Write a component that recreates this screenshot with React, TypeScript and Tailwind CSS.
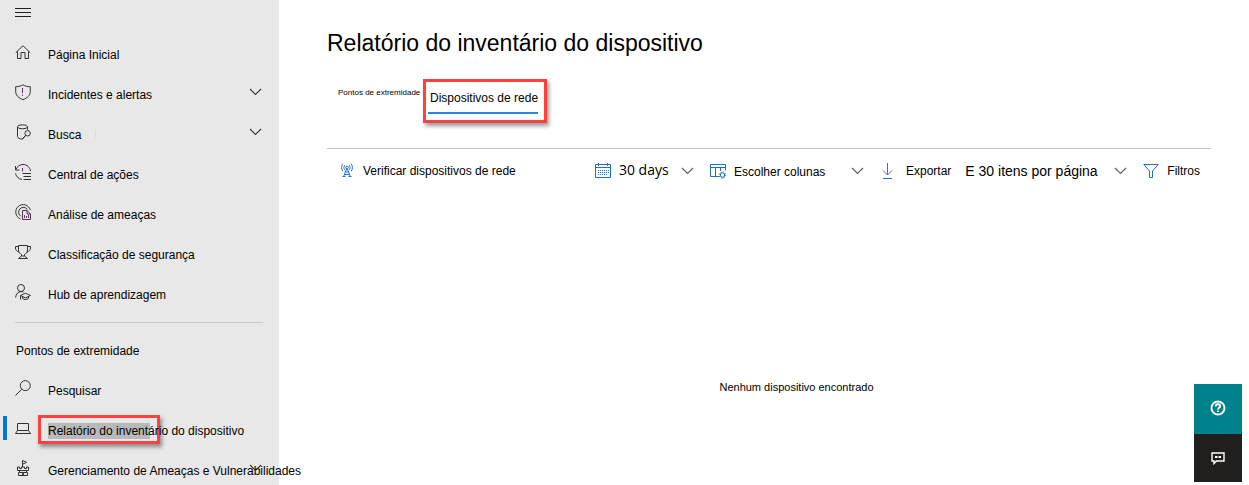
import type { ReactNode } from 'react';

type IconProps = { children: ReactNode; className?: string; size?: number };

function Icon({ children, className = '', size = 16 }: IconProps) {
  return (
    <svg
      width={size}
      height={size}
      viewBox={`0 0 ${size} ${size}`}
      fill="none"
      stroke="currentColor"
      strokeWidth="1"
      className={`shrink-0 ${className}`}
      aria-hidden="true"
    >
      {children}
    </svg>
  );
}

function Chevron({ className = '' }: { className?: string }) {
  return (
    <svg width="13" height="8" viewBox="0 0 13 8" fill="none" stroke="currentColor" strokeWidth="1.1" className={`shrink-0 ${className}`} aria-hidden="true">
      <path d="M1 1l5.500 5.500L12 1" />
    </svg>
  );
}

const homeIcon = (
  <Icon>
    <path d="M.8 8.700L8 1.700l7.200 7M2.500 7.300v7.200h3.500V8.500h4v6h3.500V7.300" />
  </Icon>
);

const shieldIcon = (
  <Icon>
    <path d="M8 .8c2 1.300 4.500 1.900 7.300 1.900v4.800c0 3.900-3 6.500-7.300 8.200C3.700 14 .7 11.400.7 7.500V2.700C3.500 2.700 6 2.100 8 .8z" />
    <path d="M7.500 4v5M7.500 10.500v1.300" stroke="#5b3560" />
  </Icon>
);

const huntingIcon = (
  <Icon>
    <ellipse cx="7.500" cy="2.800" rx="5" ry="2" />
    <path d="M2.500 2.800v9.700c0 1.500 2.200 2.500 5 2.700l2.500-3M12.500 2.800v3" />
    <circle cx="12.600" cy="9.300" r="2.700" />
    <path d="M10.700 11.200l-3.200 3.600" />
  </Icon>
);

const actionIcon = (
  <Icon>
    <path d="M.5 2v4h4M.8 5.700C2 2.500 4.800.5 8 .5c4 0 6.800 2.700 7.500 6.500M.5 9.500c.8 3.300 3.200 5.500 6.500 6" />
    <path d="M7.500 9.500H16M8.500 12.500H16M8.500 15.500H16" />
    <path d="M7.500 4v3.500" stroke="#5b3560" />
  </Icon>
);

const analyticsIcon = (
  <Icon>
    <path d="M5.500 14.900A7.400 7.400 0 1 1 15.300 6M5.800 12.200A4.800 4.800 0 1 1 12.400 5.500" />
    <path d="M7.500 6.500H12l3.500 3.500v5.500h-8zM12 6.500V10h3.500" stroke="#4d3350" />
    <path d="M9.500 14v-3M11.500 14v-2M13.500 14v-3" stroke="#742774" />
  </Icon>
);

const trophyIcon = (
  <Icon>
    <path d="M3.500 1.500h9V6c0 2.300-1.700 4-3 4.500V12h-3v-1.500C5.200 10 3.500 8.300 3.500 6zM3.500 2.500h-3V4c0 2 1.300 3.500 3.500 4M12.500 2.500h3V4c0 2-1.300 3.500-3.500 4M6.500 12l-3 2.500h9l-3-2.500" />
  </Icon>
);

const learningIcon = (
  <Icon>
    <circle cx="6" cy="4" r="3.500" />
    <path d="M.6 13.500C1 10 3 7.600 6 7.600c1 0 1.700.2 2.400.6M5.500 15.500v-4l5-2.300 5 2.300-5 2.400-5-2.400M7.500 12.500v2c2 1.300 4.200 1.300 6 0v-2" />
  </Icon>
);

const searchIcon = (
  <Icon>
    <circle cx="10.300" cy="5.600" r="5" />
    <path d="M6.700 9.200L.5 15.500" />
  </Icon>
);

const laptopIcon = (
  <Icon>
    <path d="M2.500 3.500h11v7h-11zM2.500 10.500l-2 3h15l-2-3" />
  </Icon>
);

const castleIcon = (
  <Icon>
    <path d="M7.500 7V.5l4 1.800-4 2" />
    <path d="M2.500 7v3.500h11V7h-2v1.500h-2V7h-3v1.500h-2V7zM4.500 10.500v2h-1v3h9v-3h-1v-2M4.500 12.500h7M7.500 15.500v-2h1v2" />
  </Icon>
);

type NavItem = { label: string; icon: ReactNode; expandable?: boolean; active?: boolean; marked?: boolean };

const mainItems: NavItem[] = [
  { label: 'Página Inicial', icon: homeIcon },
  { label: 'Incidentes e alertas', icon: shieldIcon, expandable: true },
  { label: 'Busca', icon: huntingIcon, expandable: true, marked: true },
  { label: 'Central de ações', icon: actionIcon },
  { label: 'Análise de ameaças', icon: analyticsIcon },
  { label: 'Classificação de segurança', icon: trophyIcon },
  { label: 'Hub de aprendizagem', icon: learningIcon },
];

const endpointItems: NavItem[] = [
  { label: 'Pesquisar', icon: searchIcon },
  { label: 'Relatório do inventário do dispositivo', icon: laptopIcon, active: true },
  { label: 'Gerenciamento de Ameaças e Vulnerabilidades', icon: castleIcon, expandable: true },
];

function NavLink({ item }: { item: NavItem }) {
  return (
    <li>
      <a href="#" aria-current={item.active ? 'page' : undefined} className="relative flex h-10 items-center pr-4 pl-[15px] whitespace-nowrap">
        {item.active && <span className="absolute top-1.5 left-[3px] h-6 w-1 bg-[#0078d4]" />}
        <span className="mr-[17px] pb-1 text-[#323130]">{item.icon}</span>
        {item.active ? (
          <span className="relative pt-0.5">
            <span className="absolute -top-1.5 -left-2.5 h-[29px] w-[122px] border-[3px] border-[#fb4141] shadow-[2px_3px_4px_rgba(0,0,0,0.4)]" />
            <span className="absolute top-0.5 left-0 h-4 w-[102px] bg-[#b9b9b9]" />
            <span className="relative">{item.label}</span>
          </span>
        ) : (
          <span className="pt-0.5">{item.label}</span>
        )}
        {item.marked && <span className="ml-3.5 h-2 w-px bg-[#b5ecec]" />}
        {item.expandable && <Chevron className="absolute top-3.5 right-[17px] text-[#3b3a39]" />}
      </a>
    </li>
  );
}

function Sidebar() {
  return (
    <aside className="relative z-10 w-[279px] shrink-0 bg-[#e8e8e8]">
      <button type="button" aria-label="Menu" className="flex h-[34px] w-full items-start pt-1 pl-[15px] text-[#201f1e]">
        <Icon>
          <path d="M0 4.500h16M0 8.500h16M0 12.500h16" />
        </Icon>
      </button>
      <nav>
        <ul>
          {mainItems.map((item) => (
            <NavLink key={item.label} item={item} />
          ))}
        </ul>
        <hr className="mt-2 mr-4 mb-[7px] ml-[15px] border-[#c8c8c8]" />
        <h2 className="flex h-10 items-center pt-0.5 pl-4">Pontos de extremidade</h2>
        <ul>
          {endpointItems.map((item) => (
            <NavLink key={item.label} item={item} />
          ))}
        </ul>
      </nav>
    </aside>
  );
}

const antennaIcon = (
  <svg width="12" height="16" viewBox="0 0 12 16" fill="none" stroke="currentColor" strokeWidth="1" className="shrink-0 text-[#1f6fc4]" aria-hidden="true">
    <path d="M5.500 6L2.500 14M6.500 6l3 8M4.500 9h3M3.500 11.500h5M1.500 13.500h3M7.500 13.500h3" />
    <circle cx="6" cy="4.500" r="1.300" />
    <path d="M3.700 2.200c-1 1.300-1 3.300 0 4.600M8.300 2.200c1 1.300 1 3.300 0 4.600M1.800.8C.2 3 .2 6 1.800 8.200M10.200.8c1.600 2.200 1.600 5.200 0 7.400" />
  </svg>
);

const calendarIcon = (
  <Icon className="text-[#1f6fc4]">
    <path d="M.5 1.500h15v13H.5zM.5 4.500h15M3.500 0v3M12.500 0v3" />
    <path d="M3 7.500h11M3 9.500h11M3 11.500h9" strokeDasharray="1 1" />
  </Icon>
);

const columnsIcon = (
  <Icon className="text-[#1f6fc4]">
    <path d="M15.500 7.500V1.500H.5v12h9M.5 4.500h15M5.500 4.500v9M10.500 4.500V8" />
    <circle cx="12.500" cy="12" r="2.200" />
    <circle cx="12.500" cy="12" r="3.100" strokeDasharray="1.200 1.235" />
  </Icon>
);

const downloadIcon = (
  <svg width="12" height="16" viewBox="0 0 12 16" fill="none" stroke="currentColor" strokeWidth="1" className="shrink-0 text-[#1f6fc4]" aria-hidden="true">
    <path d="M5.500 0v12M1 7.500L5.500 12 10 7.500" stroke="#4a6f9c" />
    <path d="M1 15.500h9" />
  </svg>
);

const filterIcon = (
  <Icon className="text-[#1f6fc4]">
    <path d="M.8 1.500h14.400L9.500 8v6.500h-3V8z" />
  </Icon>
);

function Toolbar() {
  return (
    <div className="flex h-11 items-center justify-between border-t border-[#c4c4c4] pr-[11px] pl-3.5 whitespace-nowrap">
      <button type="button" className="flex items-center gap-2.5">
        {antennaIcon}
        Verificar dispositivos de rede
      </button>
      <div className="flex items-center">
        <div className="relative mr-4 flex items-center gap-2">
          {calendarIcon}
          <select aria-label="Período" className="w-[75px] appearance-none pb-0.5 font-['Open_Sans',sans-serif] text-sm">
            <option>30 days</option>
          </select>
          <Chevron className="pointer-events-none absolute right-0 text-[#605e5c]" />
        </div>
        <button type="button" className="mr-[18px] flex items-center gap-2">
          {columnsIcon}
          <span className="w-[109px] pt-0.5 text-left">Escolher colunas</span>
          <Chevron className="text-[#605e5c]" />
        </button>
        <button type="button" className="mr-3.5 flex items-center gap-3">
          {downloadIcon}
          Exportar
        </button>
        <div className="relative mr-4 flex items-center">
          <select aria-label="Itens por página" className="w-[162px] appearance-none text-sm">
            <option>E 30 itens por página</option>
          </select>
          <Chevron className="pointer-events-none absolute right-0 text-[#605e5c]" />
        </div>
        <button type="button" className="flex items-center gap-2">
          {filterIcon}
          Filtros
        </button>
      </div>
    </div>
  );
}

export default function App() {
  return (
    <div className="relative flex h-screen overflow-hidden bg-white font-['Liberation_Sans',Arial,sans-serif] text-xs text-black">
      <Sidebar />
      <main className="flex min-w-0 grow flex-col pr-[38px] pl-12">
        <h1 className="mt-7 text-[23px] leading-[30px]">Relatório do inventário do dispositivo</h1>
        <div role="tablist" className="mt-[21px] mb-[25px] flex h-11 items-start">
          <button type="button" role="tab" aria-selected="false" className="mt-2 ml-[11px] w-[85px] text-left text-[8px] leading-3 whitespace-nowrap">
            Pontos de extremidade
          </button>
          <div className="h-11 border-[3px] border-[#fb4141] px-0.5 shadow-[2px_3px_4px_rgba(0,0,0,0.4)]">
            <button type="button" role="tab" aria-selected="true" className="mr-1 h-8 border-b-2 border-[#2b88d8] pt-0.5 pl-0.5">
              Dispositivos de rede
            </button>
          </div>
        </div>
        <Toolbar />
        <p className="mt-[187px] pl-[55px] text-center text-[11px] leading-4">Nenhum dispositivo encontrado</p>
      </main>
      <div className="absolute right-[7px] bottom-[3px] flex w-12 flex-col text-white">
        <button type="button" aria-label="Ajuda" className="flex h-[50px] items-center justify-center bg-[#00828c] pb-0.5">
          <svg width="16" height="16" viewBox="0 0 16 16" fill="none" stroke="currentColor" strokeWidth="1.900" aria-hidden="true">
            <circle cx="8" cy="8" r="6.500" />
            <path d="M5.800 6.500c0-1.400 1-2.200 2.200-2.200s2.200.8 2.200 2c0 1.500-2.200 1.600-2.200 3.200M8 10.500v1.600" />
          </svg>
        </button>
        <button type="button" aria-label="Comentários" className="flex h-12 items-center justify-center bg-[#201f1e]">
          <svg width="14" height="14" viewBox="0 0 14 14" fill="none" stroke="currentColor" strokeWidth="1.400" aria-hidden="true">
            <path d="M1 2h12v8H5.500L3 12.500V10H1z" />
            <path d="M4 6h2.500M7.500 6H10" strokeWidth="2" />
          </svg>
        </button>
      </div>
    </div>
  );
}
